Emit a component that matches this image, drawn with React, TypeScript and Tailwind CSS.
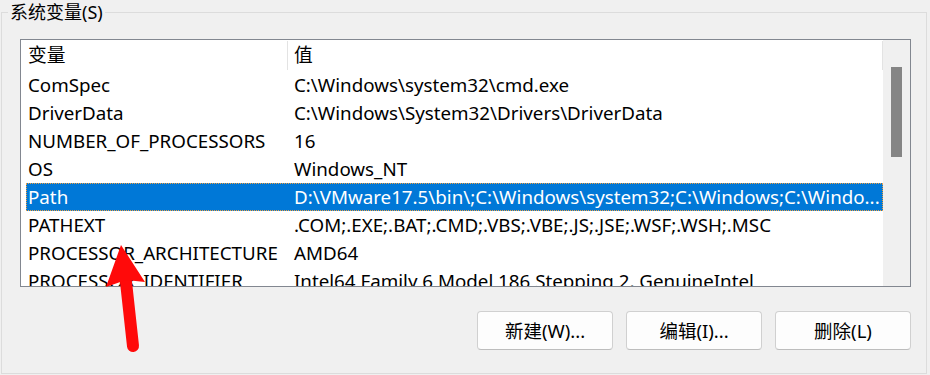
import React from "react";

interface EnvVar {
  name: string;
  value: string;
}

const vars: EnvVar[] = [
  { name: "ComSpec", value: "C:\\Windows\\system32\\cmd.exe" },
  { name: "DriverData", value: "C:\\Windows\\System32\\Drivers\\DriverData" },
  { name: "NUMBER_OF_PROCESSORS", value: "16" },
  { name: "OS", value: "Windows_NT" },
  { name: "Path", value: "D:\\VMware17.5\\bin\\;C:\\Windows\\system32;C:\\Windows;C:\\Windo..." },
  { name: "PATHEXT", value: ".COM;.EXE;.BAT;.CMD;.VBS;.VBE;.JS;.JSE;.WSF;.WSH;.MSC" },
  { name: "PROCESSOR_ARCHITECTURE", value: "AMD64" },
  { name: "PROCESSOR_IDENTIFIER", value: "Intel64 Family 6 Model 186 Stepping 2, GenuineIntel" },
];

const selected = "Path";

function Button({ label }: { label: string }) {
  return (
    <button className="flex h-[39px] w-[136px] items-center justify-center rounded-[4px] border border-[#d0d0d0] border-b-[#bdbdbd] bg-[#fdfdfd] text-[18.5px] text-black">
      {label}
    </button>
  );
}

export default function App() {
  return (
    <div
      className="relative h-[375px] w-[930px] overflow-hidden bg-[#f0f0f0] text-black"
      style={{ fontFamily: '"Noto Sans", "Noto Sans CJK SC", sans-serif' }}
    >
      <fieldset className="m-0 ml-[1px] h-[374px] w-[926px] min-w-0 border border-[#dcdcdc] p-0">
        <legend className="ml-[6px] px-[2px] text-[18px] leading-[24px]">系统变量(S)</legend>

        <div className="ml-[18px] mt-[15px] flex h-[248px] w-[891px] border border-[#828790] bg-white text-[18.75px]">
          <div className="flex-1 overflow-hidden pl-[5px]">
            <div className="flex h-[31px]">
              <div className="flex w-[261px] items-center pl-[2px]">变量</div>
              <div className="my-[1px] w-px bg-[#e3e3e3]" />
              <div className="flex flex-1 items-center pl-[6px]">值</div>
              <div className="my-[1px] w-px bg-[#e3e3e3]" />
            </div>
            {vars.map((v) => (
              <div
                key={v.name}
                className={
                  v.name === selected
                    ? "flex h-[28px] items-center whitespace-nowrap bg-[#0078d7] text-white outline-1 -outline-offset-1 outline-dotted outline-[#f0a040]"
                    : "flex h-[28px] items-center whitespace-nowrap"
                }
              >
                <div className="w-[262px] overflow-hidden pl-[2px]">{v.name}</div>
                <div className="flex-1 overflow-hidden pl-[6px]">{v.value}</div>
              </div>
            ))}
          </div>
          <div className="w-[27px] bg-[#f0f0f0] pl-[8px] pt-[27px]">
            <div className="h-[90px] w-[11px] bg-[#858585]" />
          </div>
        </div>

        <div className="mr-[15px] mt-[24px] flex justify-end gap-[13px]">
          <Button label="新建(W)..." />
          <Button label="编辑(I)..." />
          <Button label="删除(L)" />
        </div>
      </fieldset>

      {/* red annotation arrow */}
      <svg className="pointer-events-none absolute left-0 top-0" width="930" height="375" viewBox="0 0 930 375">
        <line x1="126" y1="282" x2="133" y2="346" stroke="#ff0a0a" strokeWidth="12" strokeLinecap="round" />
        <polygon points="121,245 106,287 126,280 145,282" fill="#ff0a0a" />
      </svg>
    </div>
  );
}
